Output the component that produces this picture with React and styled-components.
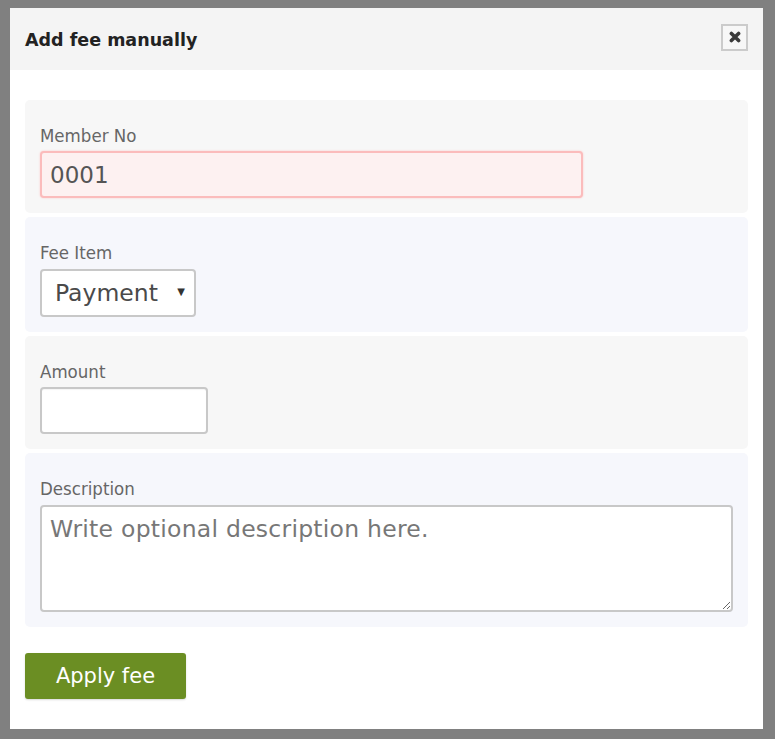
import styled, { createGlobalStyle } from 'styled-components';

const GlobalStyle = createGlobalStyle`
  html, body {
    margin: 0;
    padding: 0;
    background: #808080;
  }
  body {
    font-family: "DejaVu Sans", Verdana, sans-serif;
  }
`;

const Overlay = styled.div`
  width: 775px;
  height: 739px;
  padding: 8px 12px 10px 10px;
  box-sizing: border-box;
`;

const Dialog = styled.div`
  background: #fff;
  height: 100%;
  display: flex;
  flex-direction: column;
`;

const Header = styled.div`
  height: 62px;
  background: #f4f4f4;
  display: flex;
  align-items: center;
  justify-content: space-between;
  padding: 0 15px;
`;

const Title = styled.h2`
  margin: 2px 0 0;
  font-size: 17.5px;
  font-weight: bold;
  color: #222;
`;

const CloseButton = styled.button`
  width: 27px;
  height: 27px;
  border: 2px solid #cbcbcb;
  background: #f7f7f7;
  padding: 0;
  display: flex;
  align-items: center;
  justify-content: center;
  cursor: pointer;
  margin-top: -4px;
`;

const Body = styled.div`
  padding: 30px 15px 26px;
  display: flex;
  flex-direction: column;
  gap: 4px;
`;

const Section = styled.div`
  background: ${({ $tint }) => ($tint ? '#f6f7fc' : '#f7f7f7')};
  border-radius: 5px;
  padding: 25px 15px 15px;
  display: flex;
  flex-direction: column;
  align-items: flex-start;
`;

const Label = styled.label`
  font-family: "DejaVu Sans Condensed", "DejaVu Sans", sans-serif;
  font-size: 18.5px;
  line-height: 22px;
  color: #666;
  margin-bottom: 4px;
`;

const TextInput = styled.input`
  box-sizing: border-box;
  width: ${({ $width }) => $width}px;
  height: 47px;
  padding: 0 8px;
  font-family: "DejaVu Sans", Verdana, sans-serif;
  font-size: 23px;
  color: #555;
  border-radius: 4px;
  border: 2px solid ${({ $error }) => ($error ? '#fbbcbc' : '#c8c8c8')};
  background: ${({ $error }) => ($error ? '#fdf1f1' : '#fff')};
  box-shadow: ${({ $error }) => ($error ? '0 0 2px #fbc4c4' : 'inset 0 1px 1px rgba(0,0,0,0.04)')};
  outline: none;
`;

const SelectBox = styled.div`
  position: relative;
  box-sizing: border-box;
  width: 156px;
  height: 48px;
  margin-top: 1px;
  border: 2px solid #c8c8c8;
  border-radius: 4px;
  background: #fff;
  display: flex;
  align-items: center;
  padding-left: 13px;
  font-size: 23.5px;
  color: #4a4a4a;
`;

const Arrow = styled.span`
  position: absolute;
  right: 9px;
  top: 15px;
  font-size: 10px;
  color: #333;
`;

const TextArea = styled.textarea`
  display: block;
  box-sizing: border-box;
  width: 100%;
  height: 107px;
  margin: 1px 0 0;
  padding: 8px 8px;
  font-family: "DejaVu Sans", Verdana, sans-serif;
  font-size: 23.5px;
  letter-spacing: 0.25px;
  color: #555;
  border: 2px solid #c8c8c8;
  border-radius: 4px;
  background: #fff;
  outline: none;
  &::placeholder {
    color: #777;
  }
`;

const Footer = styled.div`
  padding: 0 15px;
`;

const ApplyButton = styled.button`
  width: 161px;
  height: 46px;
  background: #6b8e23;
  color: #fff;
  border: none;
  border-radius: 3px;
  font-family: "DejaVu Sans", Verdana, sans-serif;
  font-size: 21px;
  box-shadow: 0 1px 2px rgba(0,0,0,0.15);
  cursor: pointer;
`;

export default function App() {
  return (
    <>
      <GlobalStyle />
      <Overlay>
        <Dialog>
          <Header>
            <Title>Add fee manually</Title>
            <CloseButton aria-label="close">
              <svg width="12" height="12" viewBox="0 0 10 10">
                <path d="M2 2 L8 8 M8 2 L2 8" stroke="#3a3a3a" strokeWidth="3" strokeLinecap="round" />
              </svg>
            </CloseButton>
          </Header>
          <Body>
            <Section>
              <Label>Member No</Label>
              <TextInput $error $width={543} defaultValue="0001" />
            </Section>
            <Section $tint>
              <Label>Fee Item</Label>
              <SelectBox>
                Payment
                <Arrow>▼</Arrow>
              </SelectBox>
            </Section>
            <Section>
              <Label>Amount</Label>
              <TextInput $width={168} />
            </Section>
            <Section $tint>
              <Label>Description</Label>
              <TextArea placeholder="Write optional description here." />
            </Section>
          </Body>
          <Footer>
            <ApplyButton>Apply fee</ApplyButton>
          </Footer>
        </Dialog>
      </Overlay>
    </>
  );
}
